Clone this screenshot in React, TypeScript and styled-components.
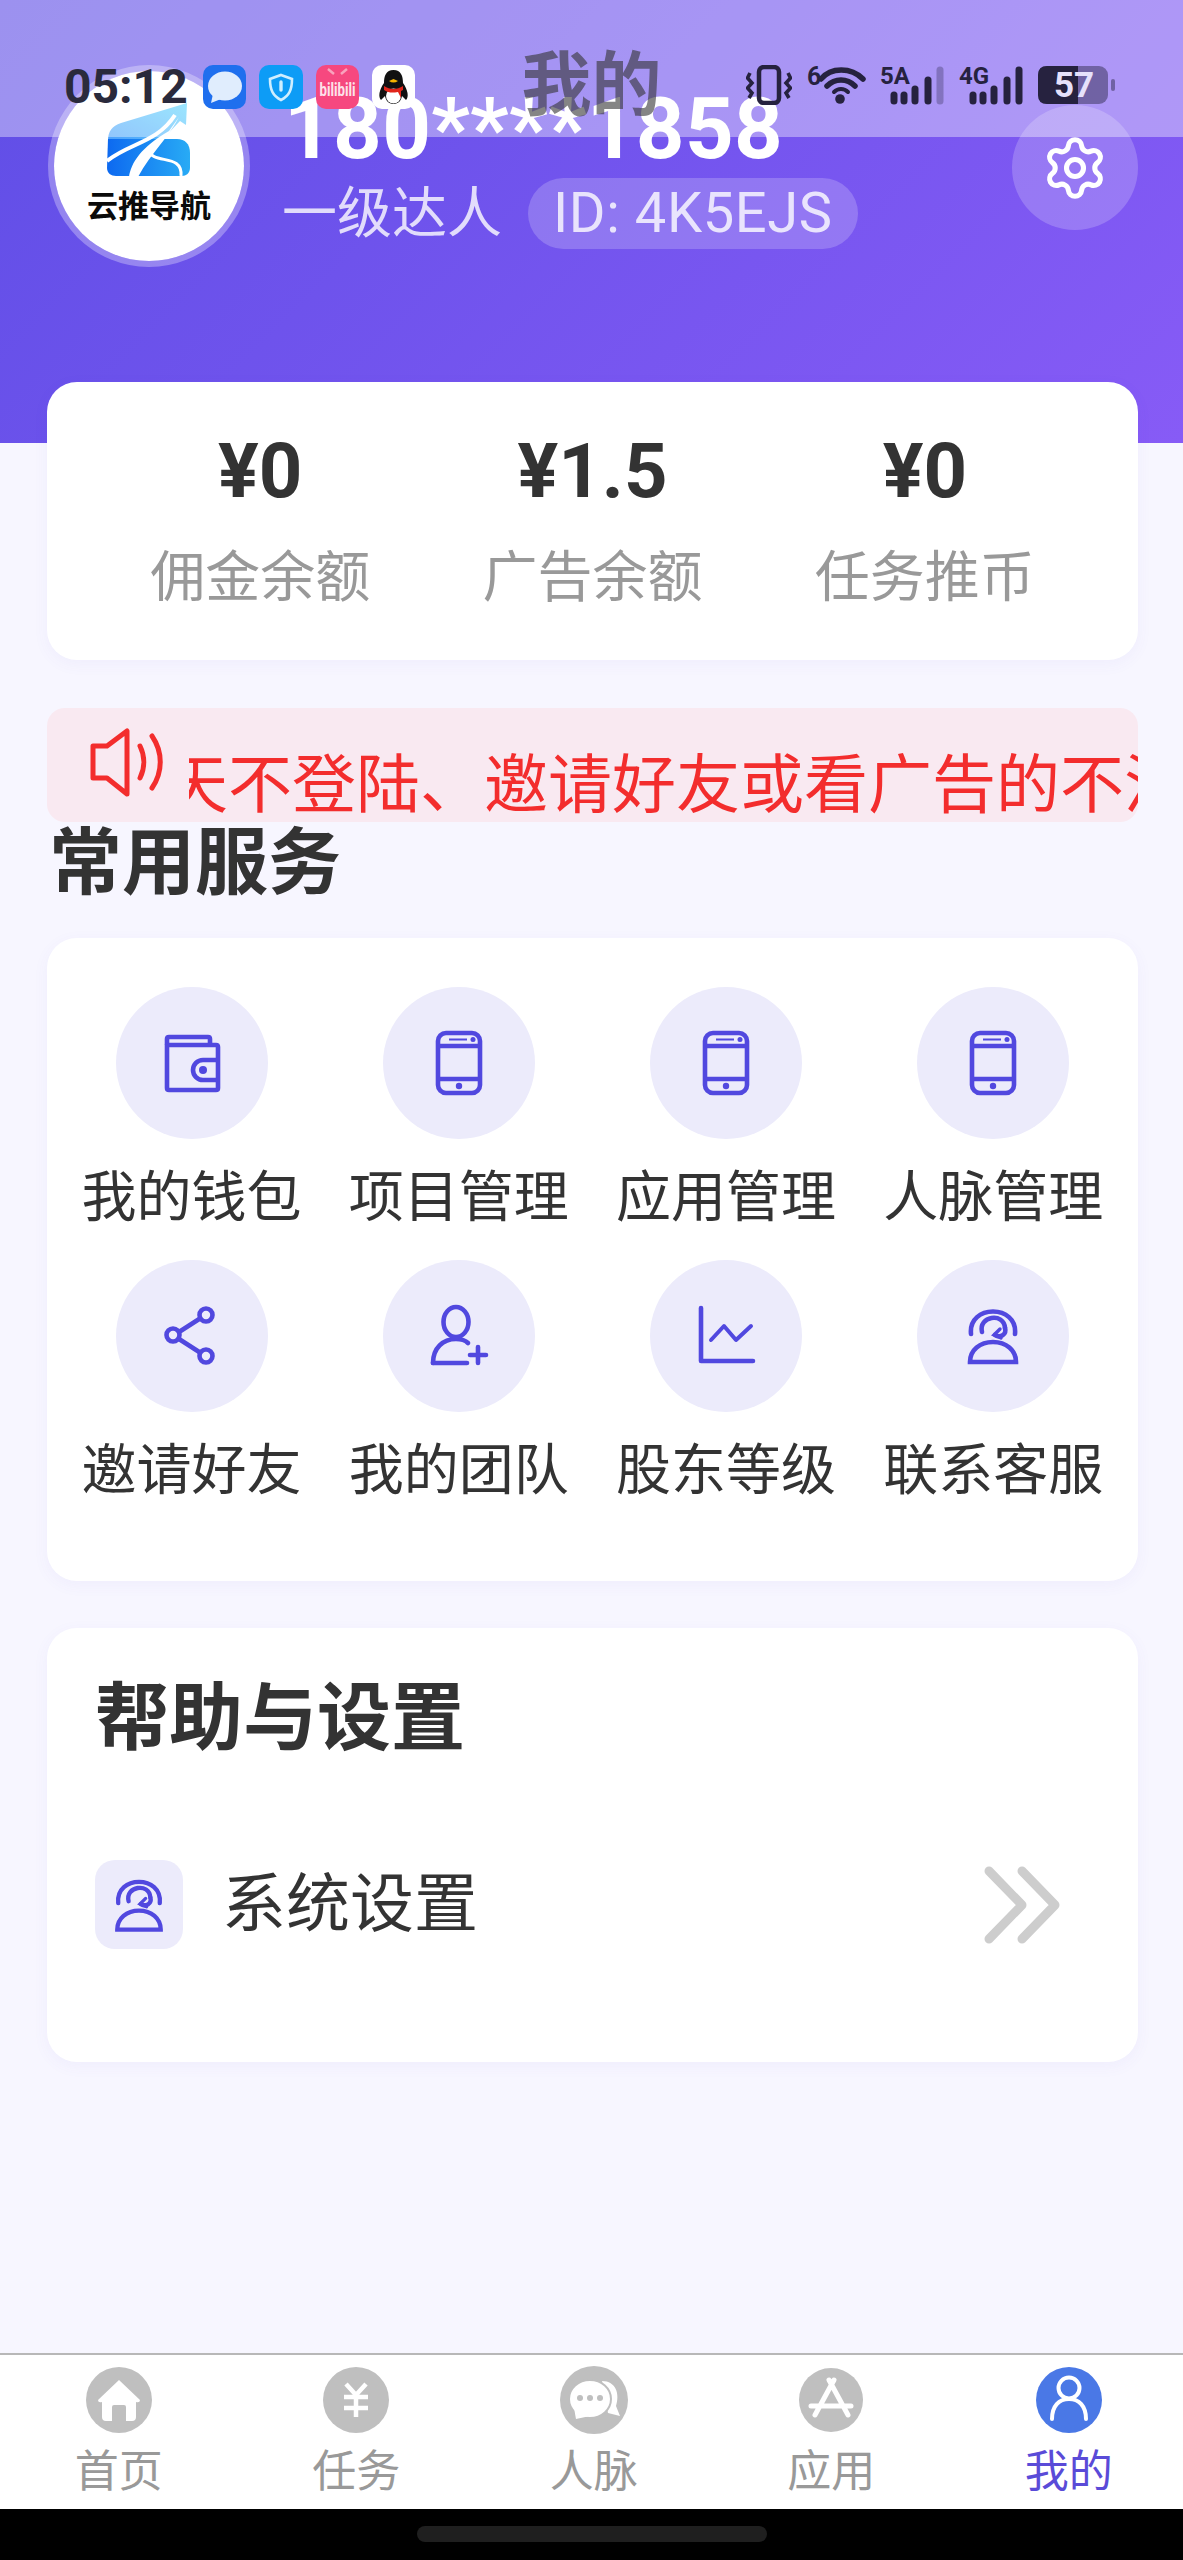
import type { ReactNode } from 'react';
import styled, { createGlobalStyle } from 'styled-components';
import { Settings } from 'lucide-react';

const FONT = `Roboto, "Noto Sans CJK SC", sans-serif`;
const ICON = '#5148df';

const GlobalStyle = createGlobalStyle`
  html, body {
    margin: 0;
    padding: 0;
    background: #f7f6ff;
  }
  * {
    box-sizing: border-box;
  }
`;

function WalletIcon() {
  return (
    <svg width="72" height="72" viewBox="0 0 72 72" fill="none" stroke={ICON} strokeWidth="4.6" strokeLinejoin="round">
      <path d="M11 18V12Q11 10 13 10H52Q54 10 54 12V18" />
      <path d="M11 18H60Q62 18 62 20V61Q62 63 60 63H13Q11 63 11 61Z" />
      <path d="M62 33H47A10 10 0 0 0 47 53H62" />
      <circle cx="47" cy="43" r="4" fill={ICON} stroke="none" />
    </svg>
  );
}

function PhoneIcon() {
  return (
    <svg width="72" height="72" viewBox="0 0 72 72" fill="none" stroke={ICON} strokeWidth="4.6">
      <rect x="15" y="6" width="42" height="60" rx="8" />
      <path d="M15 19H57M15 52H57" />
      <path d="M26 12.5H44" strokeWidth="2" />
      <circle cx="50" cy="12.5" r="2.5" fill={ICON} stroke="none" />
      <circle cx="36" cy="59" r="3.2" fill={ICON} stroke="none" />
    </svg>
  );
}

function ShareIcon() {
  return (
    <svg width="72" height="72" viewBox="0 0 72 72" fill="none" stroke={ICON} strokeWidth="4.6">
      <circle cx="50" cy="15" r="6.5" />
      <circle cx="17" cy="35" r="6.5" />
      <circle cx="50" cy="56" r="6.5" />
      <path d="M44 18.5L23 32M23 39L44 52.5" />
    </svg>
  );
}

function TeamIcon() {
  return (
    <svg width="72" height="72" viewBox="0 0 72 72" fill="none" stroke={ICON} strokeWidth="4.6" strokeLinecap="round">
      <ellipse cx="33" cy="22" rx="12.5" ry="15" />
      <path d="M10 63C10 48 20 39 33 39C38 39 42 40 45 43" />
      <path d="M10 63H44" />
      <path d="M55 47V63M47 55H63" />
    </svg>
  );
}

function ChartIcon() {
  return (
    <svg width="72" height="72" viewBox="0 0 72 72" fill="none" stroke={ICON} strokeWidth="4.6" strokeLinecap="round" strokeLinejoin="round">
      <path d="M11 8V61H63" />
      <path d="M21 40L34 26L46 40L61 26" strokeWidth="4" />
    </svg>
  );
}

function ServiceIcon({ size = 72 }: { size?: number }) {
  return (
    <svg width={size} height={size} viewBox="0 0 72 72" fill="none" stroke={ICON} strokeWidth="4.6" strokeLinecap="round">
      <path d="M13 62H59C59 50 49 42 36 42C23 42 13 50 13 62Z" />
      <path d="M14 34C11 4 61 4 58 34" />
      <path d="M25 32C21 16 47 12 48 28" />
      <path d="M48 28C50 35 43 38 38 35" />
      <path d="M43 29L37 35L44 38" strokeWidth="3.4" />
    </svg>
  );
}

function Logo() {
  return (
    <svg width="84" height="74" viewBox="0 0 84 74">
      <defs>
        <linearGradient id="logoTop" x1="0" y1="1" x2="1" y2="0">
          <stop offset="0" stopColor="#4f9ffb" />
          <stop offset="1" stopColor="#5dd6fd" />
        </linearGradient>
        <linearGradient id="logoBase" x1="0" y1="0" x2="1" y2="0">
          <stop offset="0" stopColor="#0d69f0" />
          <stop offset="1" stopColor="#28abf5" />
        </linearGradient>
      </defs>
      <path d="M1 38C1 28 5 23 14 20L80 0L79 22L73 18L52 40H1Z" fill="url(#logoTop)" />
      <path d="M1 36H70C78 36 83 41 83 50V65C83 70 79 73 75 73H9C4 73 0 70 0 65Z" fill="url(#logoBase)" />
      <path d="M0 58C22 40 50 40 68 12" fill="none" stroke="#fff" strokeWidth="4" />
      <path d="M22 74C24 60 34 44 62 28L72 14C62 34 44 50 31 74Z" fill="#fff" />
      <path d="M41 47C46 62 76 50 74 73" fill="none" stroke="#fff" strokeWidth="3" />
    </svg>
  );
}

function AppBadges() {
  return (
    <>
      <svg width="43" height="44" viewBox="0 0 43 44">
        <rect width="43" height="44" rx="10" fill="#1f6fee" />
        <ellipse cx="22" cy="21" rx="17" ry="14.5" fill="#e0edfd" />
        <path d="M10 29L8 38L18 34Z" fill="#e0edfd" />
      </svg>
      <svg width="44" height="44" viewBox="0 0 44 44">
        <rect width="44" height="44" rx="10" fill="#0d9cf6" />
        <path d="M22 10L33 14C33 25 30 31 22 35C14 31 11 25 11 14Z" fill="none" stroke="#cfeeff" strokeWidth="2.6" />
        <path d="M22 17V25" stroke="#cfeeff" strokeWidth="3.4" strokeLinecap="round" />
      </svg>
      <svg width="43" height="44" viewBox="0 0 43 44">
        <rect width="43" height="44" rx="10" fill="#f6487f" />
        <path d="M12 4L18 9M31 4L25 9" stroke="#f9a3bd" strokeWidth="2.5" />
        <text x="21.5" y="31" textAnchor="middle" fontFamily="Roboto, sans-serif" fontWeight="700" fontSize="18" fill="#fde2ea" textLength="36" lengthAdjust="spacingAndGlyphs">bilibili</text>
      </svg>
      <svg width="43" height="44" viewBox="0 0 43 44">
        <rect width="43" height="44" rx="10" fill="#fff" />
        <path d="M21.5 5C14 5 12 11 12 18C7 25 6 32 9 35L13 31C14 37 18 39 21.5 39C25 39 29 37 30 31L34 35C37 32 36 25 31 18C31 11 29 5 21.5 5Z" fill="#111" />
        <ellipse cx="21.5" cy="31" rx="7.5" ry="7.5" fill="#fff" />
        <path d="M12 21C18 25 25 25 31 21V25L29 26V33L26 27C20 28 17 28 12 25Z" fill="#e1251b" />
        <path d="M17 16C20 18 23 18 26 16L21.5 14Z" fill="#f5b400" />
      </svg>
    </>
  );
}

function StatusIcons() {
  const bars = [14, 24, 35, 48, 60];
  const tops = [30, 30, 24, 15, 5];
  const signal = (label: string, faded: boolean) => (
    <svg width="64" height="40" viewBox="0 0 64 40" overflow="visible">
      <text x="0" y="19" fontFamily="Roboto, sans-serif" fontWeight="700" fontSize="24" fill="#26223f">{label}</text>
      {bars.map((x, i) => (
        <path
          key={x}
          d={`M${x} ${tops[i]}V36`}
          stroke="#26223f"
          strokeOpacity={faded && i === 4 ? 0.3 : 1}
          strokeWidth="7"
          strokeLinecap="round"
        />
      ))}
    </svg>
  );
  return (
    <>
      <svg width="46" height="40" viewBox="0 0 46 40" fill="none" stroke="#26223f">
        <rect x="13" y="2" width="20" height="36" rx="5" strokeWidth="4.5" />
        <path d="M4 8L1.5 13L6 18L1.5 23L6 28L3 33M42 8L44.5 13L40 18L44.5 23L40 28L43 33" strokeWidth="3.6" />
      </svg>
      <svg width="58" height="40" viewBox="0 0 58 40" fill="none" stroke="#26223f" strokeLinecap="round" overflow="visible">
        <text x="0" y="20" fontFamily="Roboto, sans-serif" fontWeight="700" fontSize="25" fill="#26223f" stroke="none">6</text>
        <path d="M14 14C24 2 44 2 56 14" strokeWidth="5.5" />
        <path d="M20 21C28 13 40 13 48 21" strokeWidth="5.5" />
        <path d="M27 27C31 23 37 23 41 27" strokeWidth="4" />
        <circle cx="33" cy="34" r="4.8" fill="#26223f" stroke="none" />
      </svg>
      {signal('5A', true)}
      {signal('4G', false)}
      <svg width="77" height="38" viewBox="0 0 77 38" overflow="visible">
        <rect x="0" y="0" width="70" height="38" rx="9" fill="#26223f" fillOpacity="0.45" />
        <path d="M9 0H40V38H9Q0 38 0 29V9Q0 0 9 0Z" fill="#26223f" />
        <rect x="73" y="13" width="4" height="12" rx="2" fill="#26223f" fillOpacity="0.45" />
        <text x="36" y="31" textAnchor="middle" fontFamily="Roboto, sans-serif" fontWeight="700" fontSize="35" fill="#e6e1fb">57</text>
      </svg>
    </>
  );
}

function HomeTab() {
  return (
    <svg width="66" height="66" viewBox="0 0 66 66">
      <circle cx="33" cy="33" r="33" fill="#bfbfbf" />
      <path d="M33 13L54 33Q54 36 50 35V50Q50 54 46 54H40V40Q40 38 38 38H28Q26 38 26 40V54H20Q16 54 16 50V35Q12 36 12 33Z" fill="#fff" />
    </svg>
  );
}

function TaskTab() {
  return (
    <svg width="66" height="66" viewBox="0 0 66 66" fill="none" stroke="#fff" strokeWidth="4.5">
      <circle cx="33" cy="33" r="33" fill="#bfbfbf" stroke="none" />
      <path d="M23 17L33 28L43 17M21 30H45M21 41H45M33 28V50" />
    </svg>
  );
}

function ChatTab() {
  return (
    <svg width="68" height="68" viewBox="0 0 68 68">
      <circle cx="34" cy="34" r="34" fill="#bfbfbf" />
      <path d="M42 15C56 15 60 28 56 40L60 50L48 47Z" fill="#fff" />
      <ellipse cx="30" cy="33" rx="21" ry="19" fill="#fff" stroke="#bfbfbf" strokeWidth="2" />
      <path d="M14 42L16 53L30 50Z" fill="#fff" />
      <circle cx="20" cy="32" r="3" fill="#bfbfbf" />
      <circle cx="30" cy="32" r="3" fill="#bfbfbf" />
      <circle cx="40" cy="32" r="3" fill="#bfbfbf" />
    </svg>
  );
}

function AppTab() {
  return (
    <svg width="64" height="64" viewBox="0 0 64 64" fill="none" stroke="#fff" strokeWidth="5" strokeLinecap="round">
      <circle cx="32" cy="32" r="32" fill="#bfbfbf" stroke="none" />
      <path d="M30 12L49 47M35 12L16 47M12 38H52" />
    </svg>
  );
}

function MineTab() {
  return (
    <svg width="66" height="66" viewBox="0 0 66 66" fill="none" stroke="#fff" strokeWidth="4" strokeLinecap="round">
      <circle cx="33" cy="33" r="33" fill="#4a78e6" stroke="none" />
      <circle cx="33" cy="21" r="10.5" />
      <path d="M16 52C16 39 23 32 33 32C43 32 50 39 50 52" />
    </svg>
  );
}

const stats = [
  { value: '¥0', label: '佣金余额' },
  { value: '¥1.5', label: '广告余额' },
  { value: '¥0', label: '任务推币' },
];

const services: { label: string; icon: ReactNode }[] = [
  { label: '我的钱包', icon: <WalletIcon /> },
  { label: '项目管理', icon: <PhoneIcon /> },
  { label: '应用管理', icon: <PhoneIcon /> },
  { label: '人脉管理', icon: <PhoneIcon /> },
  { label: '邀请好友', icon: <ShareIcon /> },
  { label: '我的团队', icon: <TeamIcon /> },
  { label: '股东等级', icon: <ChartIcon /> },
  { label: '联系客服', icon: <ServiceIcon /> },
];

const tabs: { label: string; icon: ReactNode; active?: boolean }[] = [
  { label: '首页', icon: <HomeTab /> },
  { label: '任务', icon: <TaskTab /> },
  { label: '人脉', icon: <ChatTab /> },
  { label: '应用', icon: <AppTab /> },
  { label: '我的', icon: <MineTab />, active: true },
];

export default function App() {
  return (
    <>
      <GlobalStyle />
      <Page>
        <StatusBar>
          <Time>05:12</Time>
          <AppIcons>
            <AppBadges />
          </AppIcons>
          <SystemIcons>
            <StatusIcons />
          </SystemIcons>
          <PageTitle>我的</PageTitle>
        </StatusBar>

        <Header>
          <Avatar>
            <Logo />
            <AvatarName>云推导航</AvatarName>
          </Avatar>
          <Profile>
            <Phone>180****1858</Phone>
            <ProfileMeta>
              <Level>一级达人</Level>
              <IdPill>ID: 4K5EJS</IdPill>
            </ProfileMeta>
          </Profile>
          <SettingsButton>
            <Settings size={68} strokeWidth={1.8} color="#fff" />
          </SettingsButton>
        </Header>

        <Main>
          <StatsCard>
            {stats.map((stat) => (
              <Stat key={stat.label}>
                <StatValue>{stat.value}</StatValue>
                <StatLabel>{stat.label}</StatLabel>
              </Stat>
            ))}
          </StatsCard>

          <Notice>
            <svg width="78" height="70" viewBox="0 0 78 70" fill="none" stroke="#f32d2d" strokeWidth="5" strokeLinecap="round" strokeLinejoin="round">
              <path d="M3 18H17L37 3V66L17 50H3Z" />
              <path d="M50 18C55 28 55 40 50 50" />
              <path d="M62 8C73 24 73 44 62 60" />
            </svg>
            <NoticeTrack>
              <NoticeText>天不登陆、邀请好友或看广告的不活跃</NoticeText>
            </NoticeTrack>
          </Notice>

          <SectionTitle>常用服务</SectionTitle>

          <ServiceCard>
            {services.map((service) => (
              <ServiceItem key={service.label}>
                <ServiceCircle>{service.icon}</ServiceCircle>
                <ServiceLabel>{service.label}</ServiceLabel>
              </ServiceItem>
            ))}
          </ServiceCard>

          <HelpCard>
            <HelpTitle>帮助与设置</HelpTitle>
            <HelpRow>
              <HelpIcon>
                <ServiceIcon size={68} />
              </HelpIcon>
              <HelpLabel>系统设置</HelpLabel>
              <svg width="76" height="78" viewBox="0 0 76 78" fill="none" stroke="#cdcdcd" strokeWidth="9" strokeLinecap="round" strokeLinejoin="round">
                <path d="M5 5L38 39L5 73" />
                <path d="M38 5L71 39L38 73" />
              </svg>
            </HelpRow>
          </HelpCard>
        </Main>

        <TabBar>
          {tabs.map((tab) => (
            <Tab key={tab.label}>
              <TabIcon>{tab.icon}</TabIcon>
              <TabLabel $active={tab.active}>{tab.label}</TabLabel>
            </Tab>
          ))}
        </TabBar>
        <GestureArea>
          <GestureBar />
        </GestureArea>
      </Page>
    </>
  );
}

const Page = styled.div`
  position: relative;
  width: 1183px;
  height: 2560px;
  display: flex;
  flex-direction: column;
  overflow: hidden;
  background: #f7f6ff;
  font-family: ${FONT};
`;

const StatusBar = styled.div`
  position: absolute;
  top: 0;
  left: 0;
  right: 0;
  z-index: 2;
  height: 137px;
  padding: 65px 68px 0 64px;
  display: flex;
  align-items: flex-start;
  background: rgba(255, 255, 255, 0.38);
`;

const Time = styled.div`
  font-size: 48px;
  line-height: 44px;
  font-weight: 700;
  color: #2a2a3c;
`;

const AppIcons = styled.div`
  margin-left: 15px;
  display: flex;
  gap: 13px;
`;

const SystemIcons = styled.div`
  margin-left: auto;
  display: flex;
  align-items: center;
  gap: 15px;
`;

const PageTitle = styled.div`
  position: absolute;
  top: 48px;
  left: 0;
  right: 0;
  text-align: center;
  font-size: 70px;
  line-height: 76px;
  font-weight: 700;
  color: rgba(51, 51, 51, 0.6);
`;

const Header = styled.header`
  height: 443px;
  flex-shrink: 0;
  padding: 65px 45px 0 48px;
  display: flex;
  align-items: flex-start;
  background: linear-gradient(135deg, #5f4ee6, #875bf6);
`;

const Avatar = styled.div`
  width: 202px;
  height: 202px;
  padding-top: 32px;
  flex-shrink: 0;
  display: flex;
  flex-direction: column;
  align-items: center;
  border: 6px solid rgba(255, 255, 255, 0.3);
  border-radius: 50%;
  background: #fff;
  background-clip: padding-box;
`;

const AvatarName = styled.div`
  margin-top: 12px;
  font-size: 31px;
  line-height: 36px;
  font-weight: 700;
  color: #0a0a0a;
`;

const Profile = styled.div`
  margin-left: 32px;
  padding-top: 22px;
`;

const Phone = styled.div`
  margin-left: 2px;
  font-size: 85px;
  line-height: 84px;
  font-weight: 700;
  letter-spacing: 0.3px;
  color: #fff;
`;

const ProfileMeta = styled.div`
  margin-top: 7px;
  display: flex;
  align-items: center;
  gap: 26px;
`;

const Level = styled.div`
  font-size: 55px;
  line-height: 71px;
  color: rgba(255, 255, 255, 0.8);
`;

const IdPill = styled.div`
  height: 71px;
  padding: 0 25px;
  border-radius: 36px;
  font-size: 56px;
  line-height: 71px;
  letter-spacing: 0.6px;
  color: rgba(255, 255, 255, 0.8);
  background: rgba(255, 255, 255, 0.2);
`;

const SettingsButton = styled.div`
  width: 126px;
  height: 125px;
  margin: 40px 0 0 auto;
  display: flex;
  align-items: center;
  justify-content: center;
  border-radius: 50%;
  background: rgba(255, 255, 255, 0.2);
`;

const Main = styled.main`
  flex: 1;
  margin-top: -61px;
  padding: 0 45px 0 47px;
`;

const Card = styled.section`
  border-radius: 30px;
  background: #fff;
  box-shadow: 0 4px 16px rgba(90, 70, 220, 0.05);
`;

const StatsCard = styled(Card)`
  height: 278px;
  padding: 44px 47px 0;
  display: grid;
  grid-template-columns: repeat(3, 1fr);
`;

const Stat = styled.div`
  text-align: center;
`;

const StatValue = styled.div`
  font-size: 76px;
  line-height: 90px;
  font-weight: 700;
  color: #333;
`;

const StatLabel = styled.div`
  margin-top: 26px;
  font-size: 55px;
  line-height: 70px;
  color: #999;
`;

const Notice = styled.div`
  height: 114px;
  margin-top: 48px;
  padding: 20px 0 0 43px;
  display: flex;
  align-items: flex-start;
  overflow: hidden;
  border-radius: 18px;
  background: #f9e9f1;
`;

const NoticeTrack = styled.div`
  flex: 1;
  margin: 18px 0 0 21px;
  overflow: hidden;
  white-space: nowrap;
`;

const NoticeText = styled.div`
  margin-left: -25px;
  font-size: 64px;
  line-height: 80px;
  color: #f32d2d;
`;

const SectionTitle = styled.h2`
  margin: 5px 0 0 2px;
  font-size: 73px;
  line-height: 72px;
  font-weight: 700;
  color: #333;
`;

const ServiceCard = styled(Card)`
  margin-top: 39px;
  padding: 49px 11px 76px;
  display: grid;
  grid-template-columns: repeat(4, 1fr);
  row-gap: 28px;
`;

const ServiceItem = styled.div`
  display: flex;
  flex-direction: column;
  align-items: center;
`;

const ServiceCircle = styled.div`
  width: 152px;
  height: 152px;
  display: flex;
  align-items: center;
  justify-content: center;
  border-radius: 50%;
  background: #ecebfb;
`;

const ServiceLabel = styled.div`
  margin-top: 23px;
  font-size: 55px;
  line-height: 70px;
  color: #333;
`;

const HelpCard = styled(Card)`
  height: 434px;
  margin-top: 47px;
  padding: 51px 78px 0 48px;
`;

const HelpTitle = styled.h2`
  margin: 0;
  font-size: 74px;
  line-height: 80px;
  font-weight: 700;
  color: #333;
`;

const HelpRow = styled.div`
  margin-top: 101px;
  display: flex;
  align-items: center;
`;

const HelpIcon = styled.div`
  width: 88px;
  height: 89px;
  display: flex;
  align-items: center;
  justify-content: center;
  border-radius: 20px;
  background: #ecebfb;
`;

const HelpLabel = styled.div`
  flex: 1;
  margin-left: 39px;
  font-size: 64px;
  line-height: 80px;
  color: #333;
`;

const TabBar = styled.nav`
  height: 156px;
  flex-shrink: 0;
  padding-top: 12px;
  display: grid;
  grid-template-columns: repeat(5, 237.5px);
  border-top: 2px solid #b8b8b8;
  background: #fff;
`;

const Tab = styled.div`
  display: flex;
  flex-direction: column;
  align-items: center;
`;

const TabIcon = styled.div`
  height: 66px;
  display: flex;
  align-items: center;
  justify-content: center;
`;

const TabLabel = styled.div<{ $active?: boolean }>`
  margin-top: 14px;
  font-size: 44px;
  line-height: 50px;
  color: ${(props) => (props.$active ? '#5a4bd8' : '#999')};
`;

const GestureArea = styled.div`
  height: 51px;
  flex-shrink: 0;
  padding-top: 17px;
  display: flex;
  justify-content: center;
  background: #000;
`;

const GestureBar = styled.div`
  width: 350px;
  height: 16px;
  border-radius: 8px;
  background: #1f1f1f;
`;
